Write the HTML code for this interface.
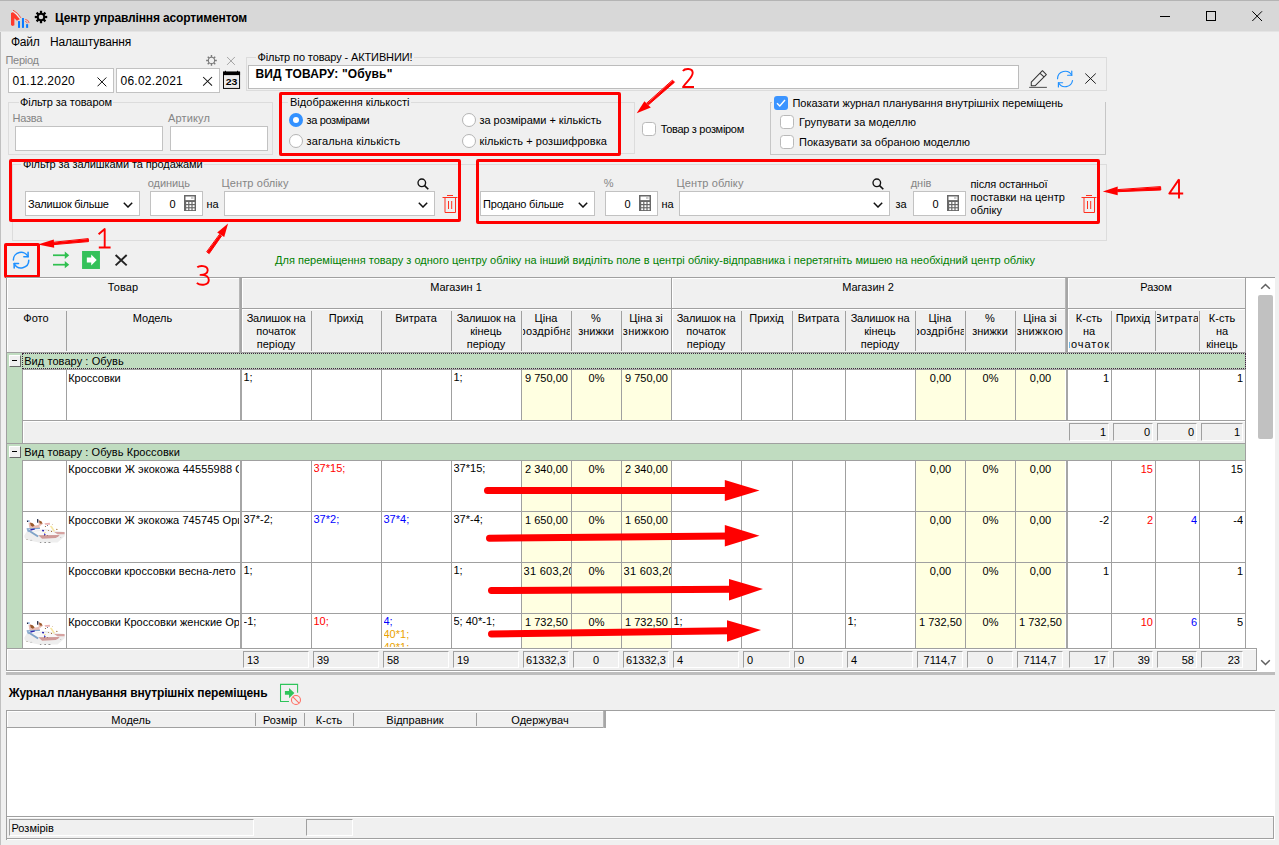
<!DOCTYPE html><html><head><meta charset="utf-8"><title>Центр управління асортиментом</title><style>
*{box-sizing:border-box;margin:0;padding:0}
html,body{width:1279px;height:845px;overflow:hidden;background:#f0f0f0}
body{font-family:"Liberation Sans",sans-serif;font-size:11px;line-height:13px;color:#000;position:relative}
div,span,svg{position:absolute}
span.s{position:static}
.t{white-space:nowrap}
.g{color:#858585}
.c{text-align:center}
.r{text-align:right}
.in{background:#fff;border:1px solid #c2c2c2}
.gb{border:1px solid #dcdcdc}
.l{background:#a0a0a0}
.w{background:#fff}
.y{background:#ffffe1}
.gr{background:#c0dcc0}
.rb{border:3px solid #f00;border-radius:2px}
.fc{border:1px solid;border-color:#a0a0a0 #fff #fff #a0a0a0;background:#f0f0f0}
.cb{width:14px!important;height:14px!important;background:#fff;border:1px solid #b9b9b9;border-radius:3.500px}
.rd{width:14px;height:14px;background:#fff;border:1px solid #b4b4b4;border-radius:50%}
.red{color:#f00}.blue{color:#00f}.or{color:#eaa200}
.h{line-height:13px;text-align:center;white-space:nowrap}
.b{font-weight:bold}
</style></head><body>
<div class="" style="left:0px;top:0px;width:1279px;height:31px;background:#d8d8d8;border-top:1px solid #b4b4b4"></div>
<div class="" style="left:0px;top:31px;width:1279px;height:1px;background:#e4e4e4"></div>
<div class="" style="left:0px;top:32px;width:1px;height:813px;background:#c0c0c0"></div>
<svg style="left:4px;top:4px" width="56" height="28" viewBox="0 0 1279 639.5" >
<path d="M160 205L215 183L365 345L295 385L237 325V488L192 502L160 478Z" fill="#ff3a2d"/>
<path d="M205 140Q320 200 385 315" stroke="#ff3a2d" stroke-width="20" fill="none"/>
<path d="M190 165Q300 225 362 335" stroke="#fff" stroke-width="16" fill="none"/>
<rect x="320" y="390" width="46" height="155" fill="#0a78ff"/><rect x="410" y="320" width="46" height="225" fill="#0a78ff"/><rect x="505" y="460" width="46" height="85" fill="#0a78ff"/>
<path d="M485 350Q560 360 575 435" stroke="#ff3a2d" stroke-width="18" fill="none"/><path d="M482 395Q522 400 532 440" stroke="#ff3a2d" stroke-width="16" fill="none"/>
<g transform="translate(845 297)" fill="#000"><circle r="98" /><g><rect x="-26" y="-142" width="52" height="60"/><rect x="-26" y="82" width="52" height="60"/><rect x="-142" y="-26" width="60" height="52"/><rect x="82" y="-26" width="60" height="52"/></g><g transform="rotate(45)"><rect x="-26" y="-142" width="52" height="60"/><rect x="-26" y="82" width="52" height="60"/><rect x="-142" y="-26" width="60" height="52"/><rect x="82" y="-26" width="60" height="52"/></g><circle r="52" fill="#d8d8d8"/></g>
</svg>
<div class="t " style="left:55px;top:11px;letter-spacing:-0.137px;font-size:12px;line-height:15px;font-weight:bold;">Центр управління асортиментом</div>
<svg style="left:1150px;top:0" width="129" height="32" viewBox="0 0 129 32" fill="none" stroke="#000" stroke-width="1">
<path d="M10 16.500H20"/><rect x="56.500" y="11.500" width="9" height="9"/><path d="M102.300 11.300L112 21M112 11.300L102.300 21"/></svg>
<div class="t " style="left:11px;top:35px;letter-spacing:-0.254px;font-size:12px;line-height:15px;">Файл</div>
<div class="t " style="left:50px;top:35px;letter-spacing:-0.163px;font-size:12px;line-height:15px;">Налаштування</div>
<div class="t g" style="left:5.5px;top:54px;letter-spacing:-0.282px;">Період</div>
<div class="in" style="left:8px;top:68px;width:106px;height:25px;"></div>
<div class="t " style="left:12.5px;top:74px;letter-spacing:0.244px;font-size:12px;line-height:15px;">01.12.2020</div>
<svg style="left:97px;top:77px" width="10" height="10" viewBox="0 0 10 10"><path d="M0.500 0.500L9.300 9.300M9.300 0.500L0.500 9.300" stroke="#111" stroke-width="1"/></svg>
<div class="in" style="left:116px;top:68px;width:104px;height:25px;"></div>
<div class="t " style="left:120.5px;top:74px;letter-spacing:0.244px;font-size:12px;line-height:15px;">06.02.2021</div>
<svg style="left:190px;top:48px" width="60" height="50" viewBox="0 0 1014 845" >
<g transform="translate(363 210)" stroke="#7a7a7a" fill="none"><circle r="52" stroke-width="17"/><path stroke-width="24" d="M0 -58V-90M0 58V90M-58 0H-90M58 0H90M41 -41L63 -63M-41 41L-63 63M41 41L63 63M-41 -41L-63 -63"/></g>
<path d="M627 152L758 285M758 152L627 285" stroke="#8c8c8c" stroke-width="13"/>
<path d="M222 490L372 636M372 490L222 636" stroke="#111" stroke-width="17"/>
<rect x="566" y="408" width="272" height="275" fill="#ececec" stroke="#000" stroke-width="16"/><rect x="558" y="400" width="288" height="58" fill="#000"/>
<rect x="590" y="385" width="18" height="30" fill="#000"/><rect x="795" y="385" width="18" height="30" fill="#000"/>
<text x="702" y="626" font-family="Liberation Sans" font-weight="bold" font-size="142" text-anchor="middle" textLength="198" lengthAdjust="spacingAndGlyphs" fill="#000">23</text>
</svg>
<div class="gb" style="left:246px;top:57px;width:861px;height:34px;"></div>
<div class="" style="left:256px;top:51px;width:158px;height:13px;background:#f0f0f0"></div>
<div class="t " style="left:257.5px;top:51px;letter-spacing:-0.111px;">Фільтр по товару - АКТИВНИИ!</div>
<div class="in" style="left:248px;top:65px;width:771px;height:24px;border-color:#bcbcbc"></div>
<div class="t " style="left:255.5px;top:67px;letter-spacing:0.157px;font-size:12px;line-height:15px;font-weight:bold;">ВИД ТОВАРУ: &quot;Обувь&quot;</div>
<svg style="left:1010px;top:60px" width="100" height="36" viewBox="0 0 1279 460.4" >
<g fill="none" stroke="#333" stroke-width="13" stroke-linejoin="round"><path d="M272 282L415 137L465 187L320 330H272Z"/><path d="M385 170L435 217"/><path d="M245 350H472" stroke-width="11"/></g>
<g fill="none" stroke="#1e90ff" stroke-width="15" stroke-linecap="round" stroke-linejoin="round"><path d="M608 240A97 97 0 0 1 790 195"/><path d="M790 142V195H737"/><path d="M800 262A97 97 0 0 1 620 292"/><path d="M619 345V291H673"/></g>
<path d="M963 173L1097 302M1097 173L963 302" stroke="#111" stroke-width="12"/>
</svg>
<div class="gb" style="left:8px;top:102px;width:265px;height:53px;"></div>
<div class="" style="left:19px;top:96px;width:94px;height:13px;background:#f0f0f0"></div>
<div class="t " style="left:20px;top:96px;letter-spacing:-0.071px;">Фільтр за товаром</div>
<div class="t g" style="left:12.5px;top:112px;letter-spacing:-0.266px;">Назва</div>
<div class="t g" style="left:168px;top:112px;letter-spacing:0.141px;">Артикул</div>
<div class="in" style="left:15px;top:126px;width:148px;height:25px;"></div>
<div class="in" style="left:170px;top:126px;width:98px;height:25px;"></div>
<div class="gb" style="left:281px;top:102px;width:354px;height:52px;"></div>
<div class="" style="left:288px;top:96px;width:123px;height:13px;background:#f0f0f0"></div>
<div class="t " style="left:290px;top:96px;letter-spacing:0.026px;">Відображення кількості</div>
<div style="left:289px;top:113px;width:14px;height:14px;border-radius:50%;background:#3391ff"></div><div style="left:293px;top:117px;width:6px;height:6px;border-radius:50%;background:#fff"></div>
<div class="t " style="left:306.6px;top:114px;letter-spacing:-0.382px;">за розмірами</div>
<div class="rd" style="left:289px;top:134px"></div>
<div class="t " style="left:306.6px;top:135px;letter-spacing:0.131px;">загальна кількість</div>
<div class="rd" style="left:462px;top:113px"></div>
<div class="t " style="left:479.5px;top:114px;letter-spacing:-0.033px;">за розмірами + кількість</div>
<div class="rd" style="left:462px;top:134px"></div>
<div class="t " style="left:479.5px;top:135px;letter-spacing:0.069px;">кількість + розшифровка</div>
<div class="rb" style="left:279px;top:92px;width:342px;height:64px;"></div>
<div class="cb" style="left:642px;top:122px;width:13px;height:13px;"></div>
<div class="t " style="left:660.7px;top:123px;letter-spacing:-0.301px;">Товар з розміром</div>
<div class="gb" style="left:770px;top:102px;width:336px;height:53px;border-color:#c6c6c6"></div>
<div class="" style="left:772px;top:96px;width:333px;height:14px;background:#f0f0f0"></div>
<div style="left:774px;top:96px;width:14px;height:14px;border-radius:3px;background:#3b94ff"></div><svg style="left:774px;top:96px" width="14" height="14" viewBox="0 0 14 14"><path d="M3 7.200L5.800 10L11 4" fill="none" stroke="#fff" stroke-width="1.400"/></svg>
<div class="t " style="left:792.5px;top:97px;letter-spacing:-0.032px;">Показати журнал планування внутрішніх переміщень</div>
<div class="cb" style="left:780px;top:115px;width:13px;height:13px;"></div>
<div class="t " style="left:799px;top:116px;letter-spacing:0.098px;">Групувати за моделлю</div>
<div class="cb" style="left:780px;top:135px;width:13px;height:13px;"></div>
<div class="t " style="left:799px;top:136px;letter-spacing:0.02px;">Показувати за обраною моделлю</div>
<div class="gb" style="left:12px;top:164px;width:1095px;height:77px;"></div>
<div class="" style="left:21px;top:158px;width:183px;height:13px;background:#f0f0f0"></div>
<div class="t " style="left:23px;top:158px;letter-spacing:-0.103px;">Фільтр за залишками та продажами</div>
<div class="in" style="left:25px;top:191px;width:115px;height:25px;"></div>
<div class="t " style="left:28px;top:198px;letter-spacing:-0.231px;">Залишок більше</div>
<svg style="left:123px;top:202px" width="10" height="6" viewBox="0 0 10 6"><path d="M0.800 0.800L5 5L9.200 0.800" fill="none" stroke="#111" stroke-width="1.500"/></svg>
<div class="t g" style="left:147.8px;top:177px;letter-spacing:-0.072px;">одиниць</div>
<div class="in" style="left:150px;top:191px;width:53px;height:25px;"></div>
<div class="t r" style="left:150px;top:198px;width:25.500px">0</div>
<svg style="left:184px;top:195px" width="12" height="16" viewBox="0 0 12 16"><rect width="12" height="16" fill="#686868"/><rect x="1.500" y="1.500" width="9" height="3.600" fill="#fff"/><rect x="7" y="2.500" width="2.500" height="1" fill="#999"/>
<g fill="#fff"><rect x="2.200" y="7" width="2" height="2"/><rect x="5.400" y="7" width="2" height="2"/><rect x="8.600" y="7" width="2" height="2"/><rect x="2.200" y="10.200" width="2" height="2"/><rect x="5.400" y="10.200" width="2" height="2"/><rect x="8.600" y="10.200" width="2" height="2"/><rect x="2.200" y="13.300" width="2" height="1.800"/><rect x="5.400" y="13.300" width="2" height="1.800"/><rect x="8.600" y="13.300" width="2" height="1.800"/></g></svg>
<div class="t " style="left:206.5px;top:198px;">на</div>
<div class="t g" style="left:221.5px;top:177px;letter-spacing:0.103px;">Центр обліку</div>
<svg style="left:417px;top:178px" width="12" height="12" viewBox="0 0 12 12" fill="none" stroke="#111" stroke-width="1.350"><circle cx="4.800" cy="4.800" r="3.800"/><path d="M7.600 7.600L11.300 11.300" stroke-width="1.600"/></svg>
<div class="in" style="left:224px;top:191px;width:211px;height:25px;"></div>
<svg style="left:418px;top:202px" width="10" height="6" viewBox="0 0 10 6"><path d="M0.800 0.800L5 5L9.200 0.800" fill="none" stroke="#111" stroke-width="1.500"/></svg>
<svg style="left:442px;top:195px" width="16" height="18" viewBox="0 0 16 18" fill="none" stroke="#ff3020" stroke-width="1"><path d="M5 0.500H11"/><path d="M0.500 2.500H15.500"/><path d="M3 2.500V17.500H13.500V2.500"/><path d="M6.500 6V14M9.700 6V14"/></svg>
<div class="rb" style="left:9px;top:159px;width:452px;height:63px;"></div>
<div class="in" style="left:480px;top:191px;width:115px;height:25px;"></div>
<div class="t " style="left:483px;top:198px;letter-spacing:-0.199px;">Продано більше</div>
<svg style="left:578px;top:202px" width="10" height="6" viewBox="0 0 10 6"><path d="M0.800 0.800L5 5L9.200 0.800" fill="none" stroke="#111" stroke-width="1.500"/></svg>
<div class="t g" style="left:603.7px;top:177px;">%</div>
<div class="in" style="left:605px;top:191px;width:53px;height:25px;"></div>
<div class="t r" style="left:605px;top:198px;width:25.500px">0</div>
<svg style="left:639px;top:195px" width="12" height="16" viewBox="0 0 12 16"><rect width="12" height="16" fill="#686868"/><rect x="1.500" y="1.500" width="9" height="3.600" fill="#fff"/><rect x="7" y="2.500" width="2.500" height="1" fill="#999"/>
<g fill="#fff"><rect x="2.200" y="7" width="2" height="2"/><rect x="5.400" y="7" width="2" height="2"/><rect x="8.600" y="7" width="2" height="2"/><rect x="2.200" y="10.200" width="2" height="2"/><rect x="5.400" y="10.200" width="2" height="2"/><rect x="8.600" y="10.200" width="2" height="2"/><rect x="2.200" y="13.300" width="2" height="1.800"/><rect x="5.400" y="13.300" width="2" height="1.800"/><rect x="8.600" y="13.300" width="2" height="1.800"/></g></svg>
<div class="t " style="left:661.5px;top:198px;">на</div>
<div class="t g" style="left:676.5px;top:177px;letter-spacing:0.103px;">Центр обліку</div>
<svg style="left:872px;top:178px" width="12" height="12" viewBox="0 0 12 12" fill="none" stroke="#111" stroke-width="1.350"><circle cx="4.800" cy="4.800" r="3.800"/><path d="M7.600 7.600L11.300 11.300" stroke-width="1.600"/></svg>
<div class="in" style="left:679px;top:191px;width:211px;height:25px;"></div>
<svg style="left:873px;top:202px" width="10" height="6" viewBox="0 0 10 6"><path d="M0.800 0.800L5 5L9.200 0.800" fill="none" stroke="#111" stroke-width="1.500"/></svg>
<div class="t " style="left:895.5px;top:198px;">за</div>
<div class="t g" style="left:910.7px;top:177px;letter-spacing:-0.008px;">днів</div>
<div class="in" style="left:913px;top:191px;width:53px;height:25px;"></div>
<div class="t r" style="left:913px;top:198px;width:25.500px">0</div>
<svg style="left:947px;top:195px" width="12" height="16" viewBox="0 0 12 16"><rect width="12" height="16" fill="#686868"/><rect x="1.500" y="1.500" width="9" height="3.600" fill="#fff"/><rect x="7" y="2.500" width="2.500" height="1" fill="#999"/>
<g fill="#fff"><rect x="2.200" y="7" width="2" height="2"/><rect x="5.400" y="7" width="2" height="2"/><rect x="8.600" y="7" width="2" height="2"/><rect x="2.200" y="10.200" width="2" height="2"/><rect x="5.400" y="10.200" width="2" height="2"/><rect x="8.600" y="10.200" width="2" height="2"/><rect x="2.200" y="13.300" width="2" height="1.800"/><rect x="5.400" y="13.300" width="2" height="1.800"/><rect x="8.600" y="13.300" width="2" height="1.800"/></g></svg>
<div class="t " style="left:970.5px;top:178px;letter-spacing:-0.136px;">після останньої</div>
<div class="t " style="left:970.5px;top:191px;letter-spacing:0.074px;">поставки на центр</div>
<div class="t " style="left:970.5px;top:204px;letter-spacing:0.044px;">обліку</div>
<svg style="left:1081px;top:195px" width="16" height="18" viewBox="0 0 16 18" fill="none" stroke="#ff3020" stroke-width="1"><path d="M5 0.500H11"/><path d="M0.500 2.500H15.500"/><path d="M3 2.500V17.500H13.500V2.500"/><path d="M6.500 6V14M9.700 6V14"/></svg>
<div class="rb" style="left:476px;top:159px;width:624px;height:65px;"></div>
<svg style="left:4px;top:240px" width="130" height="40" viewBox="0 0 1279 393.5" >
<g fill="none" stroke="#1e90ff" stroke-width="15" stroke-linecap="round" stroke-linejoin="round"><path d="M92 197A76 76 0 0 1 237 165"/><path d="M237 120V165H195"/><path d="M244 199A76 76 0 0 1 100 232"/><path d="M100 275V232H143"/></g>
<g fill="none" stroke="#30c050" stroke-width="17"><path d="M482 150H615"/><path d="M482 243H615"/></g>
<path d="M598 114L642 150L598 186Z M598 207L642 243L598 279Z" fill="#30c050"/>
<rect x="768" y="108" width="176" height="177" fill="#34c15a"/><path d="M815 173H858V143L912 197L858 251V221H815Z" fill="#fff"/>
<path d="M1098 148L1207 250M1207 148L1098 250" stroke="#222" stroke-width="19"/>
</svg>
<div class="rb" style="left:4px;top:243px;width:36px;height:35px;"></div>
<div class="t " style="left:275px;top:254px;color:#008000;letter-spacing:0.019px;">Для переміщення товару з одного центру обліку на інший виділіть поле в центрі обліку-відправника і перетягніть мишею на необхідний центр обліку</div>
<div class="w" style="left:6px;top:277px;width:1269px;height:395px;"></div>
<div class="" style="left:7px;top:278px;width:1238px;height:74px;background:#f0f0f0"></div>
<div class="l" style="left:6px;top:277px;width:1269px;height:1px;"></div>
<div class="l" style="left:6px;top:277px;width:1px;height:394px;"></div>
<div class="l" style="left:7px;top:308px;width:1238px;height:1px;"></div>
<div class="l" style="left:7px;top:352px;width:1238px;height:1px;"></div>
<div class="l" style="left:7px;top:278px;width:1238px;height:1px;background:#fff;"></div>
<div class="l" style="left:7px;top:309px;width:1238px;height:1px;background:#fff;"></div>
<div class="l" style="left:7px;top:278px;width:1px;height:74px;background:#fff;"></div>
<div class="t c" style="left:7px;top:281px;width:232px;letter-spacing:0.113px">Товар</div>
<div class="t c" style="left:241px;top:281px;width:430px;">Магазин 1</div>
<div class="t c" style="left:671px;top:281px;width:394px;">Магазин 2</div>
<div class="t c" style="left:1067px;top:281px;width:178px;">Разом</div>
<div class="l" style="left:239px;top:278px;width:1px;height:74px;background:#b6b6b6;"></div>
<div class="l" style="left:240px;top:278px;width:1px;height:74px;background:#a6a6a6;"></div>
<div class="l" style="left:241px;top:278px;width:1px;height:74px;background:#a6a6a6;"></div>
<div class="l" style="left:242px;top:279px;width:1px;height:29px;background:#fff;"></div>
<div class="l" style="left:242px;top:310px;width:1px;height:42px;background:#fff;"></div>
<div class="l" style="left:1065px;top:278px;width:1px;height:74px;background:#b6b6b6;"></div>
<div class="l" style="left:1066px;top:278px;width:1px;height:74px;background:#a6a6a6;"></div>
<div class="l" style="left:1067px;top:278px;width:1px;height:74px;background:#a6a6a6;"></div>
<div class="l" style="left:1068px;top:279px;width:1px;height:29px;background:#fff;"></div>
<div class="l" style="left:1068px;top:310px;width:1px;height:42px;background:#fff;"></div>
<div class="l" style="left:671px;top:278px;width:1px;height:74px;"></div>
<div class="l" style="left:672px;top:279px;width:1px;height:29px;background:#fff;"></div>
<div class="l" style="left:672px;top:310px;width:1px;height:42px;background:#fff;"></div>
<div class="l" style="left:1245px;top:277px;width:1px;height:394px;"></div>
<div class="l" style="left:66px;top:311px;width:1px;height:40px;"></div>
<div class="l" style="left:311px;top:311px;width:1px;height:40px;"></div>
<div class="l" style="left:381px;top:311px;width:1px;height:40px;"></div>
<div class="l" style="left:451px;top:311px;width:1px;height:40px;"></div>
<div class="l" style="left:521px;top:311px;width:1px;height:40px;"></div>
<div class="l" style="left:571px;top:311px;width:1px;height:40px;"></div>
<div class="l" style="left:621px;top:311px;width:1px;height:40px;"></div>
<div class="l" style="left:741px;top:311px;width:1px;height:40px;"></div>
<div class="l" style="left:792px;top:311px;width:1px;height:40px;"></div>
<div class="l" style="left:845px;top:311px;width:1px;height:40px;"></div>
<div class="l" style="left:915px;top:311px;width:1px;height:40px;"></div>
<div class="l" style="left:965px;top:311px;width:1px;height:40px;"></div>
<div class="l" style="left:1015px;top:311px;width:1px;height:40px;"></div>
<div class="l" style="left:1111px;top:311px;width:1px;height:40px;"></div>
<div class="l" style="left:1155px;top:311px;width:1px;height:40px;"></div>
<div class="l" style="left:1199px;top:311px;width:1px;height:40px;"></div>
<div style="left:8px;top:312px;width:57px;height:39px;overflow:hidden"><div class="t" style="left:-41px;right:-40px;top:0px;text-align:center;">Фото</div></div>
<div style="left:68px;top:312px;width:170px;height:39px;overflow:hidden"><div class="t" style="left:-41px;right:-40px;top:0px;text-align:center;">Модель</div></div>
<div style="left:243px;top:312px;width:67px;height:39px;overflow:hidden"><div class="t" style="left:-41px;right:-40px;top:0px;text-align:center;letter-spacing:-0.163px;">Залишок на</div><div class="t" style="left:-41px;right:-40px;top:13px;text-align:center;">початок</div><div class="t" style="left:-41px;right:-40px;top:26px;text-align:center;">періоду</div></div>
<div style="left:313px;top:312px;width:67px;height:39px;overflow:hidden"><div class="t" style="left:-41px;right:-40px;top:0px;text-align:center;">Прихід</div></div>
<div style="left:383px;top:312px;width:67px;height:39px;overflow:hidden"><div class="t" style="left:-41px;right:-40px;top:0px;text-align:center;">Витрата</div></div>
<div style="left:453px;top:312px;width:67px;height:39px;overflow:hidden"><div class="t" style="left:-41px;right:-40px;top:0px;text-align:center;letter-spacing:-0.163px;">Залишок на</div><div class="t" style="left:-41px;right:-40px;top:13px;text-align:center;">кінець</div><div class="t" style="left:-41px;right:-40px;top:26px;text-align:center;">періоду</div></div>
<div style="left:523px;top:312px;width:47px;height:39px;overflow:hidden"><div class="t" style="left:-41px;right:-40px;top:0px;text-align:center;">Ціна</div><div class="t" style="left:-41px;right:-40px;top:13px;text-align:center;letter-spacing:0.29px;">роздрібна</div></div>
<div style="left:573px;top:312px;width:47px;height:39px;overflow:hidden"><div class="t" style="left:-41px;right:-40px;top:0px;text-align:center;">%</div><div class="t" style="left:-41px;right:-40px;top:13px;text-align:center;">знижки</div></div>
<div style="left:623px;top:312px;width:47px;height:39px;overflow:hidden"><div class="t" style="left:-41px;right:-40px;top:0px;text-align:center;">Ціна зі</div><div class="t" style="left:-41px;right:-40px;top:13px;text-align:center;letter-spacing:0.366px;">знижкою</div></div>
<div style="left:673px;top:312px;width:67px;height:39px;overflow:hidden"><div class="t" style="left:-41px;right:-40px;top:0px;text-align:center;letter-spacing:-0.163px;">Залишок на</div><div class="t" style="left:-41px;right:-40px;top:13px;text-align:center;">початок</div><div class="t" style="left:-41px;right:-40px;top:26px;text-align:center;">періоду</div></div>
<div style="left:743px;top:312px;width:48px;height:39px;overflow:hidden"><div class="t" style="left:-41px;right:-40px;top:0px;text-align:center;">Прихід</div></div>
<div style="left:794px;top:312px;width:50px;height:39px;overflow:hidden"><div class="t" style="left:-41px;right:-40px;top:0px;text-align:center;">Витрата</div></div>
<div style="left:847px;top:312px;width:67px;height:39px;overflow:hidden"><div class="t" style="left:-41px;right:-40px;top:0px;text-align:center;letter-spacing:-0.163px;">Залишок на</div><div class="t" style="left:-41px;right:-40px;top:13px;text-align:center;">кінець</div><div class="t" style="left:-41px;right:-40px;top:26px;text-align:center;">періоду</div></div>
<div style="left:917px;top:312px;width:47px;height:39px;overflow:hidden"><div class="t" style="left:-41px;right:-40px;top:0px;text-align:center;">Ціна</div><div class="t" style="left:-41px;right:-40px;top:13px;text-align:center;letter-spacing:0.29px;">роздрібна</div></div>
<div style="left:967px;top:312px;width:47px;height:39px;overflow:hidden"><div class="t" style="left:-41px;right:-40px;top:0px;text-align:center;">%</div><div class="t" style="left:-41px;right:-40px;top:13px;text-align:center;">знижки</div></div>
<div style="left:1017px;top:312px;width:47px;height:39px;overflow:hidden"><div class="t" style="left:-41px;right:-40px;top:0px;text-align:center;">Ціна зі</div><div class="t" style="left:-41px;right:-40px;top:13px;text-align:center;letter-spacing:0.366px;">знижкою</div></div>
<div style="left:1069px;top:312px;width:41px;height:39px;overflow:hidden"><div class="t" style="left:-41px;right:-40px;top:0px;text-align:center;">К-сть</div><div class="t" style="left:-41px;right:-40px;top:13px;text-align:center;">на</div><div class="t" style="right:0;top:26px;letter-spacing:0.958px;">початок</div></div>
<div style="left:1113px;top:312px;width:41px;height:39px;overflow:hidden"><div class="t" style="left:-41px;right:-40px;top:0px;text-align:center;">Прихід</div></div>
<div style="left:1157px;top:312px;width:41px;height:39px;overflow:hidden"><div class="t" style="left:-41px;right:-40px;top:0px;text-align:center;letter-spacing:0.493px;">Витрата</div></div>
<div style="left:1201px;top:312px;width:43px;height:39px;overflow:hidden"><div class="t" style="left:-41px;right:-40px;top:0px;text-align:center;">К-сть</div><div class="t" style="left:-41px;right:-40px;top:13px;text-align:center;">на</div><div class="t" style="left:-41px;right:-40px;top:26px;text-align:center;">кінець</div></div>
<div class="gr" style="left:7px;top:353px;width:15px;height:295px;"></div>
<div class="gr" style="left:7px;top:353px;width:1238px;height:16px;"></div>
<div style="left:9px;top:355px;width:12px;height:12px;background:#f0f0f0;border:1px solid;border-color:#fff #696969 #696969 #fff"></div><div style="left:12px;top:360px;width:5px;height:1px;background:#000"></div>
<div class="t " style="left:24.2px;top:355px;letter-spacing:0.073px;">Вид товару : Обувь</div>
<div style="left:22px;top:353px;width:1224px;height:16px;border:1px dotted #3f233f"></div>
<div class="l" style="left:22px;top:369px;width:1223px;height:1px;"></div>
<div class="w" style="left:23px;top:370px;width:1222px;height:50px;"></div>
<div class="y" style="left:522px;top:370px;width:149px;height:50px;"></div>
<div class="y" style="left:916px;top:370px;width:149px;height:50px;"></div>
<div class="l" style="left:22px;top:370px;width:1px;height:50px;"></div>
<div class="l" style="left:66px;top:370px;width:1px;height:50px;"></div>
<div class="l" style="left:311px;top:370px;width:1px;height:50px;"></div>
<div class="l" style="left:381px;top:370px;width:1px;height:50px;"></div>
<div class="l" style="left:451px;top:370px;width:1px;height:50px;"></div>
<div class="l" style="left:521px;top:370px;width:1px;height:50px;"></div>
<div class="l" style="left:571px;top:370px;width:1px;height:50px;"></div>
<div class="l" style="left:621px;top:370px;width:1px;height:50px;"></div>
<div class="l" style="left:671px;top:370px;width:1px;height:50px;"></div>
<div class="l" style="left:741px;top:370px;width:1px;height:50px;"></div>
<div class="l" style="left:792px;top:370px;width:1px;height:50px;"></div>
<div class="l" style="left:845px;top:370px;width:1px;height:50px;"></div>
<div class="l" style="left:915px;top:370px;width:1px;height:50px;"></div>
<div class="l" style="left:965px;top:370px;width:1px;height:50px;"></div>
<div class="l" style="left:1015px;top:370px;width:1px;height:50px;"></div>
<div class="l" style="left:1111px;top:370px;width:1px;height:50px;"></div>
<div class="l" style="left:1155px;top:370px;width:1px;height:50px;"></div>
<div class="l" style="left:1199px;top:370px;width:1px;height:50px;"></div>
<div class="l" style="left:240px;top:370px;width:1px;height:50px;background:#a6a6a6;"></div>
<div class="l" style="left:241px;top:370px;width:1px;height:50px;background:#a6a6a6;"></div>
<div class="l" style="left:1066px;top:370px;width:1px;height:50px;background:#a6a6a6;"></div>
<div class="l" style="left:1067px;top:370px;width:1px;height:50px;background:#a6a6a6;"></div>
<div class="l" style="left:22px;top:420px;width:1223px;height:1px;"></div>
<div class="t" style="left:68.200px;top:372px;width:171px;overflow:hidden;height:14px;letter-spacing:-0.021px;">Кроссовки</div>
<div class="t " style="left:243.5px;top:371px;width:67.5px;height:40px;overflow:hidden;">1;</div>
<div class="t " style="left:453.5px;top:371px;width:67.5px;height:40px;overflow:hidden;">1;</div>
<div class="t c " style="left:522px;top:372px;width:49px;height:40px;overflow:hidden;">9 750,00</div>
<div class="t c " style="left:572px;top:372px;width:49px;height:40px;overflow:hidden;">0%</div>
<div class="t c " style="left:622px;top:372px;width:49px;height:40px;overflow:hidden;">9 750,00</div>
<div class="t c " style="left:916px;top:372px;width:49px;height:40px;overflow:hidden;">0,00</div>
<div class="t c " style="left:966px;top:372px;width:49px;height:40px;overflow:hidden;">0%</div>
<div class="t c " style="left:1016px;top:372px;width:49px;height:40px;overflow:hidden;">0,00</div>
<div class="t r " style="left:1068px;top:372px;width:41px;height:40px;overflow:hidden;">1</div>
<div class="t r " style="left:1200px;top:372px;width:43px;height:40px;overflow:hidden;">1</div>
<div class="" style="left:23px;top:421px;width:1222px;height:22px;background:#f0f0f0"></div>
<div class="l" style="left:22px;top:421px;width:1px;height:22px;"></div>
<div class="l" style="left:23px;top:421px;width:1222px;height:1px;background:#fff;"></div>
<div class="l" style="left:23px;top:421px;width:1px;height:22px;background:#fff;"></div>
<div class="fc" style="left:1069px;top:423px;width:40px;height:18px"><div class="t r" style="right:2px;top:2px">1</div></div>
<div class="fc" style="left:1113px;top:423px;width:40px;height:18px"><div class="t r" style="right:2px;top:2px">0</div></div>
<div class="fc" style="left:1157px;top:423px;width:40px;height:18px"><div class="t r" style="right:2px;top:2px">0</div></div>
<div class="fc" style="left:1201px;top:423px;width:42px;height:18px"><div class="t r" style="right:2px;top:2px">1</div></div>
<div class="l" style="left:7px;top:443px;width:1238px;height:1px;"></div>
<div class="gr" style="left:7px;top:444px;width:1238px;height:16px;"></div>
<div style="left:9px;top:446px;width:12px;height:12px;background:#f0f0f0;border:1px solid;border-color:#fff #696969 #696969 #fff"></div><div style="left:12px;top:451px;width:5px;height:1px;background:#000"></div>
<div class="t " style="left:24.2px;top:446px;letter-spacing:0.065px;">Вид товару : Обувь Кроссовки</div>
<div class="l" style="left:22px;top:460px;width:1223px;height:1px;"></div>
<div class="w" style="left:23px;top:461px;width:1222px;height:50px;"></div>
<div class="y" style="left:522px;top:461px;width:149px;height:50px;"></div>
<div class="y" style="left:916px;top:461px;width:149px;height:50px;"></div>
<div class="l" style="left:22px;top:461px;width:1px;height:50px;"></div>
<div class="l" style="left:66px;top:461px;width:1px;height:50px;"></div>
<div class="l" style="left:311px;top:461px;width:1px;height:50px;"></div>
<div class="l" style="left:381px;top:461px;width:1px;height:50px;"></div>
<div class="l" style="left:451px;top:461px;width:1px;height:50px;"></div>
<div class="l" style="left:521px;top:461px;width:1px;height:50px;"></div>
<div class="l" style="left:571px;top:461px;width:1px;height:50px;"></div>
<div class="l" style="left:621px;top:461px;width:1px;height:50px;"></div>
<div class="l" style="left:671px;top:461px;width:1px;height:50px;"></div>
<div class="l" style="left:741px;top:461px;width:1px;height:50px;"></div>
<div class="l" style="left:792px;top:461px;width:1px;height:50px;"></div>
<div class="l" style="left:845px;top:461px;width:1px;height:50px;"></div>
<div class="l" style="left:915px;top:461px;width:1px;height:50px;"></div>
<div class="l" style="left:965px;top:461px;width:1px;height:50px;"></div>
<div class="l" style="left:1015px;top:461px;width:1px;height:50px;"></div>
<div class="l" style="left:1111px;top:461px;width:1px;height:50px;"></div>
<div class="l" style="left:1155px;top:461px;width:1px;height:50px;"></div>
<div class="l" style="left:1199px;top:461px;width:1px;height:50px;"></div>
<div class="l" style="left:240px;top:461px;width:1px;height:50px;background:#a6a6a6;"></div>
<div class="l" style="left:241px;top:461px;width:1px;height:50px;background:#a6a6a6;"></div>
<div class="l" style="left:1066px;top:461px;width:1px;height:50px;background:#a6a6a6;"></div>
<div class="l" style="left:1067px;top:461px;width:1px;height:50px;background:#a6a6a6;"></div>
<div class="l" style="left:22px;top:511px;width:1223px;height:1px;"></div>
<div class="t" style="left:68.200px;top:463px;width:171px;overflow:hidden;height:14px;letter-spacing:0.07px;">Кроссовки Ж экокожа 44555988 Ориг</div>
<div class="t red" style="left:313.5px;top:462px;width:67.5px;height:40px;overflow:hidden;">37*15;</div>
<div class="t " style="left:453.5px;top:462px;width:67.5px;height:40px;overflow:hidden;">37*15;</div>
<div class="t c " style="left:522px;top:463px;width:49px;height:40px;overflow:hidden;">2 340,00</div>
<div class="t c " style="left:572px;top:463px;width:49px;height:40px;overflow:hidden;">0%</div>
<div class="t c " style="left:622px;top:463px;width:49px;height:40px;overflow:hidden;">2 340,00</div>
<div class="t c " style="left:916px;top:463px;width:49px;height:40px;overflow:hidden;">0,00</div>
<div class="t c " style="left:966px;top:463px;width:49px;height:40px;overflow:hidden;">0%</div>
<div class="t c " style="left:1016px;top:463px;width:49px;height:40px;overflow:hidden;">0,00</div>
<div class="t r red" style="left:1112px;top:463px;width:41px;height:40px;overflow:hidden;">15</div>
<div class="t r " style="left:1200px;top:463px;width:43px;height:40px;overflow:hidden;">15</div>
<div class="w" style="left:23px;top:512px;width:1222px;height:50px;"></div>
<div class="y" style="left:522px;top:512px;width:149px;height:50px;"></div>
<div class="y" style="left:916px;top:512px;width:149px;height:50px;"></div>
<div class="l" style="left:22px;top:512px;width:1px;height:50px;"></div>
<div class="l" style="left:66px;top:512px;width:1px;height:50px;"></div>
<div class="l" style="left:311px;top:512px;width:1px;height:50px;"></div>
<div class="l" style="left:381px;top:512px;width:1px;height:50px;"></div>
<div class="l" style="left:451px;top:512px;width:1px;height:50px;"></div>
<div class="l" style="left:521px;top:512px;width:1px;height:50px;"></div>
<div class="l" style="left:571px;top:512px;width:1px;height:50px;"></div>
<div class="l" style="left:621px;top:512px;width:1px;height:50px;"></div>
<div class="l" style="left:671px;top:512px;width:1px;height:50px;"></div>
<div class="l" style="left:741px;top:512px;width:1px;height:50px;"></div>
<div class="l" style="left:792px;top:512px;width:1px;height:50px;"></div>
<div class="l" style="left:845px;top:512px;width:1px;height:50px;"></div>
<div class="l" style="left:915px;top:512px;width:1px;height:50px;"></div>
<div class="l" style="left:965px;top:512px;width:1px;height:50px;"></div>
<div class="l" style="left:1015px;top:512px;width:1px;height:50px;"></div>
<div class="l" style="left:1111px;top:512px;width:1px;height:50px;"></div>
<div class="l" style="left:1155px;top:512px;width:1px;height:50px;"></div>
<div class="l" style="left:1199px;top:512px;width:1px;height:50px;"></div>
<div class="l" style="left:240px;top:512px;width:1px;height:50px;background:#a6a6a6;"></div>
<div class="l" style="left:241px;top:512px;width:1px;height:50px;background:#a6a6a6;"></div>
<div class="l" style="left:1066px;top:512px;width:1px;height:50px;background:#a6a6a6;"></div>
<div class="l" style="left:1067px;top:512px;width:1px;height:50px;background:#a6a6a6;"></div>
<div class="l" style="left:22px;top:562px;width:1223px;height:1px;"></div>
<div class="t" style="left:68.200px;top:514px;width:171px;overflow:hidden;height:14px;letter-spacing:0.056px;">Кроссовки Ж экокожа 745745 Оригинал</div>
<svg style="left:20px;top:512px;filter:blur(0.400px)" width="50" height="36" viewBox="0 0 1174 845"><g><path d="M100 560Q95 640 200 665L440 715L880 718Q960 650 1050 570V470L850 440L600 400L300 440L160 460Z" fill="#eeeeee"/><path d="M300 470L520 440L800 460L900 520L820 560L440 545Z" fill="#f8f8f8"/><path d="M200 250L260 240L340 320L450 300L470 380L300 410L220 370Z" fill="#e9bdb4"/><path d="M430 190L500 215L540 275L470 330L440 300Z" fill="#e7b9ae"/><path d="M235 250L300 262L345 318L300 345L255 320Z" fill="#9a5a2c"/><path d="M450 200L505 225L525 270L480 275L455 245Z" fill="#9a5a2c"/><path d="M172 398L468 386" stroke="#86a8cc" stroke-width="30" fill="none"/><path d="M185 420L425 575" stroke="#7fa3c8" stroke-width="42" fill="none"/><path d="M165 380L200 470" stroke="#8fb0d0" stroke-width="30" fill="none"/><path d="M190 190L232 192L228 232L195 232Z" fill="#a8c8f0"/><path d="M163 200L192 200L192 235L165 232Z" fill="#1a2440"/><path d="M400 165L432 168L428 250L402 250Z" fill="#1a2440"/><path d="M240 405L345 385L350 410L250 440Z" fill="#2a22b0"/><path d="M518 418L565 425L560 455L520 450Z" fill="#2a22b0"/><path d="M565 495L600 520L598 545L565 540Z" fill="#3a30c8"/><path d="M430 548L930 540L900 575L840 612L520 628Z" fill="#cf9a98"/><path d="M800 470L1045 468L1048 520L880 522Z" fill="#d6a3a1"/><path d="M575 262L700 255L705 300L590 298Z" fill="#eab0b0"/><path d="M700 330L745 325L825 450L790 465Z" fill="#f7e7a4"/><path d="M568 470L612 472L610 500L570 500Z" fill="#f7e7a4"/><circle cx="598" cy="340" r="14" fill="#8a5a2a"/><circle cx="668" cy="432" r="12" fill="#a07840"/><circle cx="740" cy="455" r="13" fill="#9a6a30"/><circle cx="865" cy="408" r="16" fill="#a87840"/><circle cx="762" cy="292" r="10" fill="#b08060"/><circle cx="645" cy="318" r="12" fill="#4a5a80"/><ellipse cx="485" cy="712" rx="22" ry="9" fill="#555"/><ellipse cx="590" cy="714" rx="24" ry="9" fill="#444"/><ellipse cx="690" cy="713" rx="36" ry="8" fill="#666"/><ellipse cx="165" cy="642" rx="24" ry="9" fill="#9a9080"/><ellipse cx="262" cy="662" rx="30" ry="9" fill="#aaa"/><ellipse cx="955" cy="598" rx="16" ry="8" fill="#999"/><ellipse cx="575" cy="548" rx="14" ry="10" fill="#5a3030"/><ellipse cx="645" cy="548" rx="12" ry="9" fill="#7a4a40"/></g></svg>
<div class="t " style="left:243.5px;top:513px;width:67.5px;height:40px;overflow:hidden;">37*-2;</div>
<div class="t blue" style="left:313.5px;top:513px;width:67.5px;height:40px;overflow:hidden;">37*2;</div>
<div class="t blue" style="left:383.5px;top:513px;width:67.5px;height:40px;overflow:hidden;">37*4;</div>
<div class="t " style="left:453.5px;top:513px;width:67.5px;height:40px;overflow:hidden;">37*-4;</div>
<div class="t c " style="left:522px;top:514px;width:49px;height:40px;overflow:hidden;">1 650,00</div>
<div class="t c " style="left:572px;top:514px;width:49px;height:40px;overflow:hidden;">0%</div>
<div class="t c " style="left:622px;top:514px;width:49px;height:40px;overflow:hidden;">1 650,00</div>
<div class="t c " style="left:916px;top:514px;width:49px;height:40px;overflow:hidden;">0,00</div>
<div class="t c " style="left:966px;top:514px;width:49px;height:40px;overflow:hidden;">0%</div>
<div class="t c " style="left:1016px;top:514px;width:49px;height:40px;overflow:hidden;">0,00</div>
<div class="t r " style="left:1068px;top:514px;width:41px;height:40px;overflow:hidden;">-2</div>
<div class="t r red" style="left:1112px;top:514px;width:41px;height:40px;overflow:hidden;">2</div>
<div class="t r blue" style="left:1156px;top:514px;width:41px;height:40px;overflow:hidden;">4</div>
<div class="t r " style="left:1200px;top:514px;width:43px;height:40px;overflow:hidden;">-4</div>
<div class="w" style="left:23px;top:563px;width:1222px;height:50px;"></div>
<div class="y" style="left:522px;top:563px;width:149px;height:50px;"></div>
<div class="y" style="left:916px;top:563px;width:149px;height:50px;"></div>
<div class="l" style="left:22px;top:563px;width:1px;height:50px;"></div>
<div class="l" style="left:66px;top:563px;width:1px;height:50px;"></div>
<div class="l" style="left:311px;top:563px;width:1px;height:50px;"></div>
<div class="l" style="left:381px;top:563px;width:1px;height:50px;"></div>
<div class="l" style="left:451px;top:563px;width:1px;height:50px;"></div>
<div class="l" style="left:521px;top:563px;width:1px;height:50px;"></div>
<div class="l" style="left:571px;top:563px;width:1px;height:50px;"></div>
<div class="l" style="left:621px;top:563px;width:1px;height:50px;"></div>
<div class="l" style="left:671px;top:563px;width:1px;height:50px;"></div>
<div class="l" style="left:741px;top:563px;width:1px;height:50px;"></div>
<div class="l" style="left:792px;top:563px;width:1px;height:50px;"></div>
<div class="l" style="left:845px;top:563px;width:1px;height:50px;"></div>
<div class="l" style="left:915px;top:563px;width:1px;height:50px;"></div>
<div class="l" style="left:965px;top:563px;width:1px;height:50px;"></div>
<div class="l" style="left:1015px;top:563px;width:1px;height:50px;"></div>
<div class="l" style="left:1111px;top:563px;width:1px;height:50px;"></div>
<div class="l" style="left:1155px;top:563px;width:1px;height:50px;"></div>
<div class="l" style="left:1199px;top:563px;width:1px;height:50px;"></div>
<div class="l" style="left:240px;top:563px;width:1px;height:50px;background:#a6a6a6;"></div>
<div class="l" style="left:241px;top:563px;width:1px;height:50px;background:#a6a6a6;"></div>
<div class="l" style="left:1066px;top:563px;width:1px;height:50px;background:#a6a6a6;"></div>
<div class="l" style="left:1067px;top:563px;width:1px;height:50px;background:#a6a6a6;"></div>
<div class="l" style="left:22px;top:613px;width:1223px;height:1px;"></div>
<div class="t" style="left:68.200px;top:565px;width:171px;overflow:hidden;height:14px;letter-spacing:0.04px;">Кроссовки кроссовки весна-лето 2020</div>
<div class="t " style="left:243.5px;top:564px;width:67.5px;height:40px;overflow:hidden;">1;</div>
<div class="t " style="left:453.5px;top:564px;width:67.5px;height:40px;overflow:hidden;">1;</div>
<div class="t " style="left:523.5px;top:565px;width:47.5px;height:40px;overflow:hidden;letter-spacing:0.285px;">31 603,20</div>
<div class="t c " style="left:572px;top:565px;width:49px;height:40px;overflow:hidden;">0%</div>
<div class="t " style="left:623.5px;top:565px;width:47.5px;height:40px;overflow:hidden;letter-spacing:0.285px;">31 603,20</div>
<div class="t c " style="left:916px;top:565px;width:49px;height:40px;overflow:hidden;">0,00</div>
<div class="t c " style="left:966px;top:565px;width:49px;height:40px;overflow:hidden;">0%</div>
<div class="t c " style="left:1016px;top:565px;width:49px;height:40px;overflow:hidden;">0,00</div>
<div class="t r " style="left:1068px;top:565px;width:41px;height:40px;overflow:hidden;">1</div>
<div class="t r " style="left:1200px;top:565px;width:43px;height:40px;overflow:hidden;">1</div>
<div class="w" style="left:23px;top:614px;width:1222px;height:34px;"></div>
<div class="y" style="left:522px;top:614px;width:149px;height:34px;"></div>
<div class="y" style="left:916px;top:614px;width:149px;height:34px;"></div>
<div class="l" style="left:22px;top:614px;width:1px;height:34px;"></div>
<div class="l" style="left:66px;top:614px;width:1px;height:34px;"></div>
<div class="l" style="left:311px;top:614px;width:1px;height:34px;"></div>
<div class="l" style="left:381px;top:614px;width:1px;height:34px;"></div>
<div class="l" style="left:451px;top:614px;width:1px;height:34px;"></div>
<div class="l" style="left:521px;top:614px;width:1px;height:34px;"></div>
<div class="l" style="left:571px;top:614px;width:1px;height:34px;"></div>
<div class="l" style="left:621px;top:614px;width:1px;height:34px;"></div>
<div class="l" style="left:671px;top:614px;width:1px;height:34px;"></div>
<div class="l" style="left:741px;top:614px;width:1px;height:34px;"></div>
<div class="l" style="left:792px;top:614px;width:1px;height:34px;"></div>
<div class="l" style="left:845px;top:614px;width:1px;height:34px;"></div>
<div class="l" style="left:915px;top:614px;width:1px;height:34px;"></div>
<div class="l" style="left:965px;top:614px;width:1px;height:34px;"></div>
<div class="l" style="left:1015px;top:614px;width:1px;height:34px;"></div>
<div class="l" style="left:1111px;top:614px;width:1px;height:34px;"></div>
<div class="l" style="left:1155px;top:614px;width:1px;height:34px;"></div>
<div class="l" style="left:1199px;top:614px;width:1px;height:34px;"></div>
<div class="l" style="left:240px;top:614px;width:1px;height:34px;background:#a6a6a6;"></div>
<div class="l" style="left:241px;top:614px;width:1px;height:34px;background:#a6a6a6;"></div>
<div class="l" style="left:1066px;top:614px;width:1px;height:34px;background:#a6a6a6;"></div>
<div class="l" style="left:1067px;top:614px;width:1px;height:34px;background:#a6a6a6;"></div>
<div class="t" style="left:68.200px;top:616px;width:171px;overflow:hidden;height:14px;letter-spacing:0.014px;">Кроссовки Кроссовки женские Оригинал</div>
<svg style="left:20px;top:614px;filter:blur(0.400px)" width="50" height="36" viewBox="0 0 1174 845"><g><path d="M100 560Q95 640 200 665L440 715L880 718Q960 650 1050 570V470L850 440L600 400L300 440L160 460Z" fill="#eeeeee"/><path d="M300 470L520 440L800 460L900 520L820 560L440 545Z" fill="#f8f8f8"/><path d="M200 250L260 240L340 320L450 300L470 380L300 410L220 370Z" fill="#e9bdb4"/><path d="M430 190L500 215L540 275L470 330L440 300Z" fill="#e7b9ae"/><path d="M235 250L300 262L345 318L300 345L255 320Z" fill="#9a5a2c"/><path d="M450 200L505 225L525 270L480 275L455 245Z" fill="#9a5a2c"/><path d="M172 398L468 386" stroke="#86a8cc" stroke-width="30" fill="none"/><path d="M185 420L425 575" stroke="#7fa3c8" stroke-width="42" fill="none"/><path d="M165 380L200 470" stroke="#8fb0d0" stroke-width="30" fill="none"/><path d="M190 190L232 192L228 232L195 232Z" fill="#a8c8f0"/><path d="M163 200L192 200L192 235L165 232Z" fill="#1a2440"/><path d="M400 165L432 168L428 250L402 250Z" fill="#1a2440"/><path d="M240 405L345 385L350 410L250 440Z" fill="#2a22b0"/><path d="M518 418L565 425L560 455L520 450Z" fill="#2a22b0"/><path d="M565 495L600 520L598 545L565 540Z" fill="#3a30c8"/><path d="M430 548L930 540L900 575L840 612L520 628Z" fill="#cf9a98"/><path d="M800 470L1045 468L1048 520L880 522Z" fill="#d6a3a1"/><path d="M575 262L700 255L705 300L590 298Z" fill="#eab0b0"/><path d="M700 330L745 325L825 450L790 465Z" fill="#f7e7a4"/><path d="M568 470L612 472L610 500L570 500Z" fill="#f7e7a4"/><circle cx="598" cy="340" r="14" fill="#8a5a2a"/><circle cx="668" cy="432" r="12" fill="#a07840"/><circle cx="740" cy="455" r="13" fill="#9a6a30"/><circle cx="865" cy="408" r="16" fill="#a87840"/><circle cx="762" cy="292" r="10" fill="#b08060"/><circle cx="645" cy="318" r="12" fill="#4a5a80"/><ellipse cx="485" cy="712" rx="22" ry="9" fill="#555"/><ellipse cx="590" cy="714" rx="24" ry="9" fill="#444"/><ellipse cx="690" cy="713" rx="36" ry="8" fill="#666"/><ellipse cx="165" cy="642" rx="24" ry="9" fill="#9a9080"/><ellipse cx="262" cy="662" rx="30" ry="9" fill="#aaa"/><ellipse cx="955" cy="598" rx="16" ry="8" fill="#999"/><ellipse cx="575" cy="548" rx="14" ry="10" fill="#5a3030"/><ellipse cx="645" cy="548" rx="12" ry="9" fill="#7a4a40"/></g></svg>
<div class="t " style="left:243.5px;top:615px;width:67.5px;height:32px;overflow:hidden;">-1;</div>
<div class="t red" style="left:313.5px;top:615px;width:67.5px;height:32px;overflow:hidden;">10;</div>
<div class="t " style="left:383.5px;top:615px;width:67.5px;height:32px;overflow:hidden;"><span class="s blue">4;</span><br><span class="s or">40*1;<br>40*1;</span></div>
<div class="t " style="left:453.5px;top:615px;width:67.5px;height:32px;overflow:hidden;">5; 40*-1;</div>
<div class="t c " style="left:522px;top:616px;width:49px;height:32px;overflow:hidden;">1 732,50</div>
<div class="t c " style="left:572px;top:616px;width:49px;height:32px;overflow:hidden;">0%</div>
<div class="t c " style="left:622px;top:616px;width:49px;height:32px;overflow:hidden;">1 732,50</div>
<div class="t " style="left:673.5px;top:615px;width:67.5px;height:32px;overflow:hidden;">1;</div>
<div class="t " style="left:847.5px;top:615px;width:67.5px;height:32px;overflow:hidden;">1;</div>
<div class="t c " style="left:916px;top:616px;width:49px;height:32px;overflow:hidden;">1 732,50</div>
<div class="t c " style="left:966px;top:616px;width:49px;height:32px;overflow:hidden;">0%</div>
<div class="t c " style="left:1016px;top:616px;width:49px;height:32px;overflow:hidden;">1 732,50</div>
<div class="t r red" style="left:1112px;top:616px;width:41px;height:32px;overflow:hidden;">10</div>
<div class="t r blue" style="left:1156px;top:616px;width:41px;height:32px;overflow:hidden;">6</div>
<div class="t r " style="left:1200px;top:616px;width:43px;height:32px;overflow:hidden;">5</div>
<div class="" style="left:6px;top:648px;width:1251px;height:23px;background:#f0f0f0;border:1px solid #a0a0a0"></div>
<div class="l" style="left:7px;top:649px;width:1249px;height:1px;background:#fff;"></div>
<div class="l" style="left:7px;top:649px;width:1px;height:21px;background:#fff;"></div>
<div class="fc" style="left:243px;top:651px;width:66px;height:17px"><div class="t" style="left:3px;top:2px">13</div></div>
<div class="fc" style="left:313px;top:651px;width:66px;height:17px"><div class="t" style="left:3px;top:2px">39</div></div>
<div class="fc" style="left:383px;top:651px;width:66px;height:17px"><div class="t" style="left:3px;top:2px">58</div></div>
<div class="fc" style="left:453px;top:651px;width:66px;height:17px"><div class="t" style="left:3px;top:2px">19</div></div>
<div class="fc" style="left:523px;top:651px;width:46px;height:17px"><div class="t c" style="left:0;right:0;top:2px">61332,3</div></div>
<div class="fc" style="left:573px;top:651px;width:46px;height:17px"><div class="t c" style="left:0;right:0;top:2px">0</div></div>
<div class="fc" style="left:623px;top:651px;width:46px;height:17px"><div class="t c" style="left:0;right:0;top:2px">61332,3</div></div>
<div class="fc" style="left:673px;top:651px;width:66px;height:17px"><div class="t" style="left:3px;top:2px">4</div></div>
<div class="fc" style="left:743px;top:651px;width:47px;height:17px"><div class="t" style="left:3px;top:2px">0</div></div>
<div class="fc" style="left:794px;top:651px;width:49px;height:17px"><div class="t" style="left:3px;top:2px">0</div></div>
<div class="fc" style="left:847px;top:651px;width:66px;height:17px"><div class="t" style="left:3px;top:2px">4</div></div>
<div class="fc" style="left:917px;top:651px;width:46px;height:17px"><div class="t c" style="left:0;right:0;top:2px">7114,7</div></div>
<div class="fc" style="left:967px;top:651px;width:46px;height:17px"><div class="t c" style="left:0;right:0;top:2px">0</div></div>
<div class="fc" style="left:1017px;top:651px;width:46px;height:17px"><div class="t c" style="left:0;right:0;top:2px">7114,7</div></div>
<div class="fc" style="left:1069px;top:651px;width:40px;height:17px"><div class="t r" style="right:2px;top:2px">17</div></div>
<div class="fc" style="left:1113px;top:651px;width:40px;height:17px"><div class="t r" style="right:2px;top:2px">39</div></div>
<div class="fc" style="left:1157px;top:651px;width:40px;height:17px"><div class="t r" style="right:2px;top:2px">58</div></div>
<div class="fc" style="left:1201px;top:651px;width:42px;height:17px"><div class="t r" style="right:2px;top:2px">23</div></div>
<svg style="left:1260px;top:283px" width="11" height="7" viewBox="0 0 11 7"><path d="M1.200 5.800L5.500 1.500L9.800 5.800" fill="none" stroke="#606060" stroke-width="1.500"/></svg>
<div class="" style="left:1258px;top:295px;width:15px;height:144px;background:#c1c1c1;border-radius:2px"></div>
<svg style="left:1260px;top:659px" width="11" height="7" viewBox="0 0 11 7"><path d="M1.200 1.200L5.500 5.500L9.800 1.200" fill="none" stroke="#606060" stroke-width="1.500"/></svg>
<div class="" style="left:6px;top:672px;width:1269px;height:3px;background:#bdbdbd"></div>
<svg style="left:0;top:0" width="1279" height="845" viewBox="0 0 1279 845">
<g stroke="#f00" fill="#f00" stroke-linecap="round" stroke-linejoin="round">
<path d="M487.500 490.500H730" stroke-width="7"/><path d="M724.800 480L759.500 490.500L724.800 501Z" stroke="none"/>
<path d="M489.500 538.200L730 536" stroke-width="7"/><path d="M724.800 525L759.500 535.700L724.800 546.500Z" stroke="none"/>
<path d="M491.500 590.500L733 589.200" stroke-width="7"/><path d="M729 579L763 589L729 600.500Z" stroke="none"/>
<path d="M491.500 634L731 630.700" stroke-width="7"/><path d="M727 620.200L761 630L727 641.700Z" stroke="none"/>
<path d="M88.300 239L88.500 241.600L54 244.600L53.800 242.600Z" stroke-width="1"/><path d="M37.800 244.400L53.800 239.500L54.200 247.800Z" stroke="none"/>
<path d="M207 252L209.200 253.600L221.500 236L219.800 234.600Z" stroke-width="1"/><path d="M228.100 223.400L217.200 232.400L224.200 237Z" stroke="none"/>
<path d="M672.700 80.400L674.500 82.200L648.500 104.800L647 103.400Z" stroke-width="1"/><path d="M636.700 113.200L644.400 101.200L650.800 107.400Z" stroke="none"/>
<path d="M1160.600 187L1160.800 190L1117.700 191.700L1117.600 190Z" stroke-width="1"/><path d="M1102.800 191.400L1117.700 186.500L1117.700 195.200Z" stroke="none"/>
</g>
<g stroke="#f00" fill="none" stroke-width="1.900" stroke-linejoin="round">
<path d="M98.600 234.300L104.700 229V247.500M98.800 247.500H110.600"/>
<path d="M197.300 267.300C199.500 265.500 207.500 265 207.700 270.300C207.800 273.800 204 274.900 200.500 274.900C205.600 274.900 208.800 276.500 208.800 280C208.800 285.200 200.800 286 196.800 283"/>
<path d="M682.900 71C684.500 68.500 692.600 67.600 692.700 72.800C692.800 77 688 80.500 683 87H694"/>
<path d="M1179 179.200V198.600M1179 179.400L1169.300 193.500H1183.200"/>
</g></svg>
<div class="t " style="left:8.7px;top:686px;letter-spacing:-0.128px;font-size:12px;line-height:15px;font-weight:bold;">Журнал планування внутрішніх переміщень</div>
<svg style="left:270px;top:676px" width="44" height="36" viewBox="0 0 1033 845" >
<path d="M648 395V197H247V598H445" fill="none" stroke="#2ec45a" stroke-width="25"/>
<path d="M350 355H447V280L572 398L447 520V440H350Z" fill="#2ec45a"/>
<circle cx="610" cy="565" r="105" fill="#f0f0f0" stroke="#ff6a5e" stroke-width="24"/><path d="M537 492L683 638" stroke="#ff6a5e" stroke-width="24"/>
</svg>
<div class="w" style="left:6px;top:710px;width:1269px;height:130px;border-top:1px solid #a0a0a0;border-left:1px solid #a0a0a0"></div>
<div class="" style="left:7px;top:711px;width:597px;height:17px;background:#f0f0f0;border-top:1px solid #fff;border-left:1px solid #fff"></div>
<div class="l" style="left:7px;top:727px;width:597px;height:1px;"></div>
<div class="l" style="left:603px;top:711px;width:1px;height:17px;background:#b6b6b6;"></div>
<div class="l" style="left:604px;top:711px;width:1px;height:17px;background:#a6a6a6;"></div>
<div class="l" style="left:605px;top:711px;width:1px;height:17px;background:#a6a6a6;"></div>
<div class="l" style="left:255px;top:713px;width:1px;height:13px;"></div>
<div class="l" style="left:304px;top:713px;width:1px;height:13px;"></div>
<div class="l" style="left:353px;top:713px;width:1px;height:13px;"></div>
<div class="l" style="left:476px;top:713px;width:1px;height:13px;"></div>
<div class="t c" style="left:7px;top:714px;width:248px;">Модель</div>
<div class="t c" style="left:256px;top:714px;width:48px;">Розмір</div>
<div class="t c" style="left:305px;top:714px;width:48px;">К-сть</div>
<div class="t c" style="left:354px;top:714px;width:122px;">Відправник</div>
<div class="t c" style="left:477px;top:714px;width:126px;">Одержувач</div>
<div class="" style="left:6px;top:816px;width:1268px;height:23px;background:#f0f0f0;border:1px solid #a0a0a0"></div>
<div class="l" style="left:7px;top:817px;width:1266px;height:1px;background:#fff;"></div>
<div class="fc" style="left:9px;top:819px;width:245px;height:17px"><div class="t" style="left:1.5px;top:2px">Розмірів</div></div>
<div class="fc" style="left:306px;top:819px;width:47px;height:17px"><div class="t" style="left:3px;top:2px"></div></div>
</body></html>
